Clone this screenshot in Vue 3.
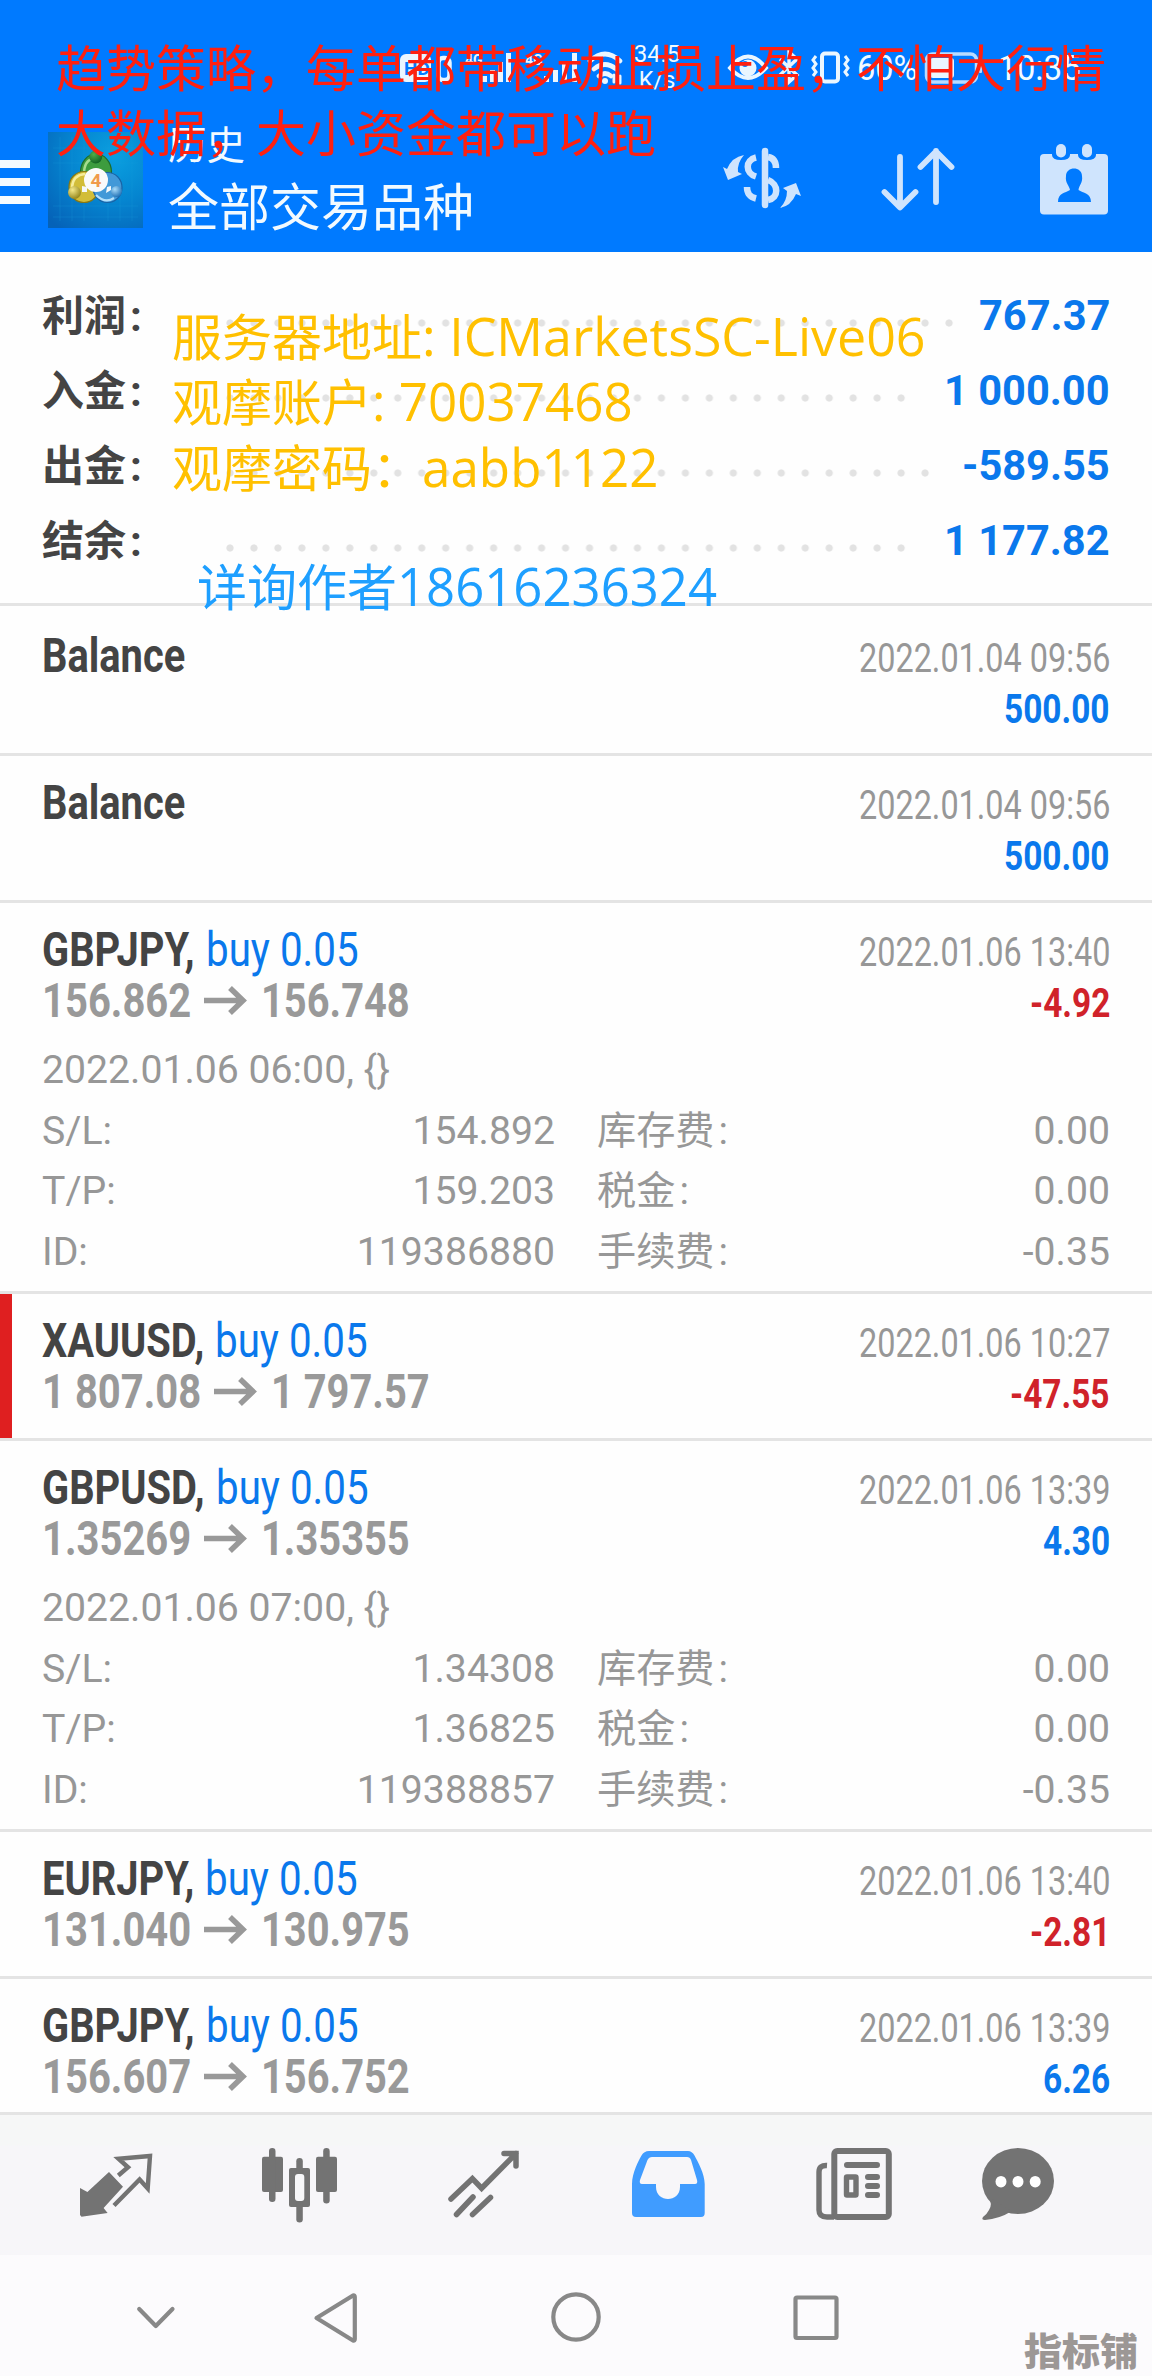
<script setup>
// Narrows text horizontally by a factor and gives the saved width back to the layout.
const vSqueeze = {
  mounted(el, { value }) {
    const w = el.getBoundingClientRect().width
    el.style.transform = `scaleX(${value})`
    el.style.marginRight = `${w * (value - 1)}px`
  },
}

const summary = [
  { label: '利润', value: '767.37', dots: 31 },
  { label: '入金', value: '1 000.00', dots: 29 },
  { label: '出金', value: '-589.55', dots: 30 },
  { label: '结余', value: '1 177.82', dots: 29 },
]

const deals = [
  { title: 'Balance', date: '2022.01.04 09:56', profit: '500.00', first: true },
  { title: 'Balance', date: '2022.01.04 09:56', profit: '500.00' },
  {
    title: 'GBPJPY,', side: 'buy 0.05', date: '2022.01.06 13:40', from: '156.862', to: '156.748', profit: '-4.92',
    details: {
      opened: '2022.01.06 06:00, {}',
      rows: [
        ['S/L:', '154.892', '库存费', '0.00'],
        ['T/P:', '159.203', '税金', '0.00'],
        ['ID:', '119386880', '手续费', '-0.35'],
      ],
    },
  },
  { title: 'XAUUSD,', side: 'buy 0.05', date: '2022.01.06 10:27', from: '1 807.08', to: '1 797.57', profit: '-47.55', marked: true },
  {
    title: 'GBPUSD,', side: 'buy 0.05', date: '2022.01.06 13:39', from: '1.35269', to: '1.35355', profit: '4.30',
    details: {
      opened: '2022.01.06 07:00, {}',
      rows: [
        ['S/L:', '1.34308', '库存费', '0.00'],
        ['T/P:', '1.36825', '税金', '0.00'],
        ['ID:', '119388857', '手续费', '-0.35'],
      ],
    },
  },
  { title: 'EURJPY,', side: 'buy 0.05', date: '2022.01.06 13:40', from: '131.040', to: '130.975', profit: '-2.81' },
  { title: 'GBPJPY,', side: 'buy 0.05', date: '2022.01.06 13:39', from: '156.607', to: '156.752', profit: '6.26' },
]
</script>

<template>
  <div class="screen">
    <header class="header">
      <div class="status">
        <svg class="net" viewBox="400 44 226 44" width="226" height="44">
          <rect x="400" y="54" width="31" height="28" rx="6" fill="#eaf6ff" />
          <text x="404" y="75" font-size="19" font-weight="700" fill="#007aff" font-family="Roboto, sans-serif">HD</text>
          <rect x="438.500" y="58" width="11" height="22" rx="4.500" fill="none" stroke="#eaf6ff" stroke-width="4.500" />
          <g fill="#eaf6ff" font-family="Roboto, sans-serif" font-size="14" font-weight="700">
            <text x="465" y="65">4G</text>
            <text x="525" y="65">4G</text>
          </g>
          <g fill="#eaf6ff">
            <rect x="482" y="76" width="5" height="6" /><rect x="490" y="70" width="5" height="12" /><rect x="498" y="62" width="5" height="20" /><rect x="506" y="53" width="5" height="29" />
            <rect x="544" y="76" width="5" height="6" /><rect x="553" y="70" width="5" height="12" /><rect x="562" y="62" width="5" height="20" /><rect x="572" y="53" width="5" height="29" />
          </g>
          <g fill="none" stroke="#eaf6ff" stroke-width="4.600" stroke-linecap="round">
            <path d="M590 61Q605 47 620 61M594 69Q605 60 616 69M599 76Q605 71 611 76" />
            <path d="M614 82v-7M620 76v7" stroke-width="3" />
          </g>
          <circle cx="605" cy="81" r="3" fill="#eaf6ff" />
        </svg>
        <div class="speed"><span>34.5</span><span>K/s</span></div>
        <svg class="sys" viewBox="726 46 126 42" width="126" height="42" fill="none" stroke="#eaf6ff">
          <path d="M730 68Q748 45 766 68Q748 88 730 68Z" stroke-width="4" />
          <circle cx="748" cy="68" r="8.500" fill="#eaf6ff" stroke="none" />
          <circle cx="745" cy="64" r="3" fill="#007aff" stroke="none" />
          <path d="M780 59L797 75L789 82V52L797 59L780 75" stroke-width="3.400" />
          <rect x="822" y="53.500" width="16" height="28" rx="3" stroke-width="4" />
          <path d="M816 56l-3 4 3 4-3 4 3 4-3 4M845 56l3 4-3 4 3 4-3 4 3 4" stroke-width="3" />
        </svg>
        <span v-squeeze="0.93" class="battery-text">60%</span>
        <svg class="battery" viewBox="926 48 62 40" width="62" height="40">
          <rect x="930.500" y="54" width="50" height="28" rx="6" fill="none" stroke="#b9dcff" stroke-width="3.500" />
          <rect x="934" y="58" width="24" height="20" rx="3" fill="#eaf6ff" />
          <rect x="983" y="63" width="3" height="10" rx="1" fill="#b9dcff" />
        </svg>
        <span v-squeeze="0.95" class="clock">10:35</span>
      </div>
      <div class="toolbar">
        <div class="menu"><i></i><i></i><i></i></div>
        <svg class="logo" viewBox="48 132 95 96" width="95" height="96">
          <defs>
            <radialGradient id="sq" cx="0.7" cy="0.25" r="0.95"><stop offset="0" stop-color="#0aa0e0" /><stop offset="0.5" stop-color="#0585d0" /><stop offset="1" stop-color="#0562b8" /></radialGradient>
            <radialGradient id="ye" cx="0.35" cy="0.3" r="0.8"><stop offset="0" stop-color="#f4e88a" /><stop offset="1" stop-color="#8a7c10" /></radialGradient>
            <radialGradient id="bl" cx="0.35" cy="0.3" r="0.8"><stop offset="0" stop-color="#a8dcfa" /><stop offset="1" stop-color="#1668b0" /></radialGradient>
            <radialGradient id="gr" cx="0.35" cy="0.3" r="0.8"><stop offset="0" stop-color="#4fae48" /><stop offset="1" stop-color="#0c5a20" /></radialGradient>
          </defs>
          <rect x="48" y="132" width="95" height="96" fill="url(#sq)" />
          <path d="M60 137v84M72 137v84M84 137v84M108 137v84M120 137v84M132 137v84M53 148h85M53 163h85M53 206h85M53 217h85" stroke="#1aa0dc" stroke-width="0.600" opacity="0.450" />
          <ellipse cx="96" cy="172" rx="15.500" ry="18" fill="#3d9c3e" stroke="#1d6b2c" stroke-width="1.200" />
          <path d="M84 172Q85 158 97 158" fill="none" stroke="#a5dc90" stroke-width="2.500" />
          <ellipse cx="84" cy="187" rx="15" ry="15.500" fill="#d2bd38" stroke="#857716" stroke-width="1.200" />
          <path d="M72 187Q73 175 85 174" fill="none" stroke="#f6ec9a" stroke-width="2.500" />
          <ellipse cx="107.500" cy="187.500" rx="14.500" ry="15" fill="#4299d8" stroke="#1a62a4" stroke-width="1.200" />
          <path d="M96 195Q105 204 114 198" fill="none" stroke="#b4e0fa" stroke-width="2.200" />
          <path d="M82 186l5 1v5h-5zM107 187l4-1v4l-5 3z" fill="#f4f8fa" />
          <circle cx="95.700" cy="157" r="6.500" fill="url(#gr)" />
          <circle cx="74.500" cy="192.500" r="6.500" fill="url(#ye)" />
          <circle cx="116.500" cy="191.500" r="5.500" fill="url(#bl)" />
          <circle cx="96" cy="180" r="12" fill="#fafafa" />
          <text x="96" y="187" text-anchor="middle" font-size="19" font-weight="700" fill="#f09a4c" font-family="Roboto, sans-serif">4</text>
        </svg>
        <div class="titles">
          <span class="sub">历史</span>
          <span class="main">全部交易品种</span>
        </div>
        <svg class="dollar" viewBox="720 140 84 76" width="84" height="76" fill="none" stroke="#cfe4fd" stroke-width="6.500">
          <path d="M765 151V205" stroke-linecap="round" />
          <path d="M756 157.500C745 160 745 173 756 176.500M768 157C774 158 776 162 776 168M768 180C779 184 779 198 768 200M747 187C747 194 750 197 756 198.500" />
          <path d="M744 155Q732 157 727 169L723 167L728 180L742 174L738 172Q737 163 744 155Z" fill="#cfe4fd" stroke="none" />
          <path d="M780 208Q787 201 787 191L783 188L796 183L801 196L796 194Q791 206 780 208Z" fill="#cfe4fd" stroke="none" />
        </svg>
        <svg class="sort" viewBox="878 140 80 76" width="80" height="76" fill="none" stroke="#cfe4fd" stroke-width="5.800" stroke-linecap="round" stroke-linejoin="round">
          <path d="M900 157V207M884.500 192L900 207.500L915.500 192M936 202V151M920.500 167L936 151.500L951.500 167" />
        </svg>
        <svg class="cal" viewBox="1036 140 76 80" width="76" height="80">
          <rect x="1040" y="154" width="68" height="60.500" rx="4" fill="#cfe4fd" />
          <path d="M1052 153v2q0 5 9 5t9-5v-2zM1078 153v2q0 5 9 5t9-5v-2z" fill="#007aff" />
          <rect x="1056" y="144" width="10" height="13.500" rx="5" fill="#cfe4fd" />
          <rect x="1082" y="144" width="10" height="13.500" rx="5" fill="#cfe4fd" />
          <path d="M1066 176C1066 166 1082 166 1082 176C1083 183 1079 185 1078.500 190C1083 193 1091 193 1091 202H1058C1058 193 1065 193 1070 190C1069 185 1065 183 1066 176Z" fill="#007aff" />
        </svg>
      </div>
    </header>

    <section class="summary">
      <div v-for="s in summary" :key="s.label" class="sum-row">
        <span class="sum-label">{{ s.label }}<span class="colon">:</span></span>
        <i class="dots" :style="{ width: s.dots * 23.97 + 'px' }"></i>
        <b v-squeeze="0.99" class="sum-value">{{ s.value }}</b>
      </div>
    </section>

    <main class="deals">
      <article v-for="(d, n) in deals" :key="n" class="deal" :class="{ first: d.first, open: d.details }">
        <i v-if="d.marked" class="mark"></i>
        <div class="line">
          <span class="left">
            <b v-squeeze="0.83" class="symbol">{{ d.title }}</b>
            <span v-if="d.side" v-squeeze="0.84" class="side">{{ d.side }}</span>
          </span>
          <span v-squeeze="0.81" class="date">{{ d.date }}</span>
        </div>
        <div class="line">
          <span v-if="d.from" class="left prices">
            <b v-squeeze="0.833">{{ d.from }}</b>
            <svg class="arrow" width="43" height="30" viewBox="0 0 43 30" fill="none" stroke="#999" stroke-width="5.500">
              <path d="M0 14.500H39M26 2L39 14.500L26 27" />
            </svg>
            <b v-squeeze="0.83">{{ d.to }}</b>
          </span>
          <b v-squeeze="0.835" class="profit" :class="{ loss: d.profit[0] === '-' }">{{ d.profit }}</b>
        </div>
        <div v-if="d.details" class="details">
          <div class="opened">{{ d.details.opened }}</div>
          <div v-for="r in d.details.rows" :key="r[0]" class="cells">
            <span>{{ r[0] }}</span><span class="num">{{ r[1] }}</span>
            <span class="cjk">{{ r[2] }}<span class="colon">:</span></span><span class="num">{{ r[3] }}</span>
          </div>
        </div>
      </article>
    </main>

    <nav class="tabs">
      <svg viewBox="74 2138 84 90">
        <path d="M80 2188L87.400 2192L109 2172L123 2186.700L103.600 2208L107.600 2213L81.500 2216.700L80 2215Z" fill="#737373" />
        <path d="M118.300 2175.500L128 2167.300L118.500 2158.700L150 2156L147.700 2188.500L139.600 2179.500L114 2205.500" fill="none" stroke="#737373" stroke-width="4.400" />
      </svg>
      <svg viewBox="258 2138 84 90" fill="#737373">
        <rect x="262" y="2156.700" width="21" height="35.300" rx="2" /><rect x="269" y="2148" width="6.500" height="54" rx="3.200" />
        <rect x="316" y="2156.700" width="21" height="35.300" rx="2" /><rect x="323.200" y="2148" width="6.500" height="55.500" rx="3.200" />
        <rect x="289" y="2168" width="21" height="39" rx="2" /><rect x="296.300" y="2158" width="6.500" height="64.500" rx="3.200" />
        <rect x="295" y="2174" width="9.300" height="27" rx="3" fill="#f7f7f9" />
      </svg>
      <svg viewBox="442 2138 84 90" fill="none" stroke="#737373" stroke-width="5.500" stroke-linecap="round">
        <path d="M451 2199L472.400 2178.700L481.600 2188.200L516 2153.500M504 2153.500H516V2166M456.500 2214.500L473 2197M472.500 2214.500L490.500 2197.500" />
      </svg>
      <svg viewBox="626 2138 84 90">
        <path fill-rule="evenodd" d="M632 2213V2184C632 2173 639 2160 641.500 2155.500Q644 2151 649 2151H688Q692 2151 694.500 2155.500C698 2162 704.700 2174 704.700 2184V2213Q704.700 2217 701 2217H636Q632 2217 632 2213ZM652 2157Q649 2157 647.500 2160L640 2180Q639 2184 642 2184H656V2187C656 2203 680 2203 680 2187V2184H695Q698 2184 697 2180L691 2160Q690 2157 687 2157Z" fill="#409cff" />
      </svg>
      <svg viewBox="812 2138 84 90" fill="none" stroke="#737373" stroke-width="6">
        <rect x="834.300" y="2151" width="54.500" height="66" rx="3" />
        <path d="M827 2165.500Q819 2165 819 2172V2210Q819 2217 827 2217H834" stroke-width="5.400" />
        <path d="M847 2165H877M868 2177H877M868 2186H877M868 2195H877" stroke-linecap="round" />
        <rect x="846.500" y="2177" width="9.500" height="18" rx="0.500" stroke-width="5.400" />
      </svg>
      <svg viewBox="976 2138 84 90" fill="#737373">
        <ellipse cx="1018" cy="2181" rx="36" ry="33" />
        <path d="M988 2196Q993 2204 989 2210Q987 2214 983 2217Q981 2220 985 2220Q999 2219 1012 2211Z" />
        <g fill="#fff"><ellipse cx="1001" cy="2181.700" rx="5.500" ry="5.800" /><ellipse cx="1018" cy="2181.700" rx="5.500" ry="5.800" /><ellipse cx="1035.200" cy="2181.700" rx="5.500" ry="5.800" /></g>
      </svg>
    </nav>

    <footer class="sysnav">
      <svg viewBox="126 2287 60 60"><path d="M139.200 2309L155.800 2326L172.500 2309" /></svg>
      <svg viewBox="305 2287 60 60"><path d="M316.500 2318L353 2295.500Q354.800 2295 354.800 2297V2339Q354.800 2341 353 2340.500Z" /></svg>
      <svg viewBox="546 2287 60 60"><circle cx="576" cy="2317" r="22.700" /></svg>
      <svg viewBox="786 2287 60 60"><rect x="795.500" y="2297.500" width="41" height="40.500" rx="1.500" /></svg>
      <span class="brand">指标铺</span>
    </footer>

    <div class="note promo"><div>趋势策略，每单都带移动止损止盈，不怕大行情</div><div>大数据，大小资金都可以跑</div></div>
    <div class="note account">
      <div>服务器地址<span v-squeeze="0.98" class="latin">: ICMarketsSC-Live06</span></div>
      <div>观摩账户<span v-squeeze="0.965" class="latin">: 70037468</span></div>
      <div>观摩密码：<span v-squeeze="0.965" class="latin">aabb1122</span></div>
    </div>
    <div class="note contact"><div>详询作者<span v-squeeze="0.96" class="latin">18616236324</span></div></div>
  </div>
</template>

<style>
body {
  background: #fff;
}
</style>

<style scoped>
.screen {
  position: relative;
  width: 1152px;
  height: 2376px;
  overflow: hidden;
  display: flex;
  flex-direction: column;
  background: #fefefe;
  font-family: Roboto, 'Noto Sans CJK SC', sans-serif;
  white-space: nowrap;
}
.screen * {
  box-sizing: border-box;
}
svg {
  display: block;
  flex: none;
}
/* header */
.header {
  height: 252px;
  flex: none;
  background: #007aff;
  color: #f2faff;
}
.status {
  height: 104px;
  display: flex;
  align-items: flex-start;
  padding-left: 400px;
}
.net {
  margin-top: 44px;
}
.speed {
  width: 52px;
  margin: 41px 0 0 5px;
  display: flex;
  flex-direction: column;
  align-items: center;
  font-size: 23.5px;
  line-height: 26px;
}
.sys {
  margin: 46px 0 0 43px;
}
.battery-text,
.clock {
  display: inline-block;
  transform-origin: left;
  font-size: 35px;
  line-height: 40px;
  margin-top: 49px;
}
.battery-text {
  margin-left: 5px;
}
.battery {
  margin: 48px 0 0 5px;
}
.clock {
  margin-left: 14px;
}
.toolbar {
  height: 148px;
  display: flex;
  align-items: flex-start;
}
.menu {
  width: 30px;
  margin-top: 56px;
  display: flex;
  flex-direction: column;
  gap: 10px;
}
.menu i {
  height: 8px;
  background: #f4faff;
}
.logo {
  margin: 28px 0 0 18px;
}
.titles {
  width: 577px;
  padding-left: 25px;
  display: flex;
  flex-direction: column;
}
.sub {
  font-size: 38.5px;
  line-height: 44px;
  margin-top: 20px;
}
.main {
  font-size: 51px;
  line-height: 60px;
  margin-top: 11px;
}
.dollar {
  margin-top: 36px;
}
.sort {
  margin: 36px 0 0 74px;
}
.cal {
  margin: 36px 0 0 78px;
}
/* summary */
.summary {
  height: 351px;
  flex: none;
  padding: 26px 42px 0;
}
.sum-row {
  height: 75px;
  display: flex;
  align-items: baseline;
  line-height: 75px;
  font-size: 42px;
}
.sum-label {
  width: 176px;
  font-weight: 700;
  color: #444;
  position: relative;
  top: 1px;
}
.colon {
  margin-left: 4px;
}
.dots {
  height: 8px;
  align-self: center;
  margin-top: 14px;
  margin-right: auto;
  background: radial-gradient(circle at 50% 50%, #e2e2e2 3.2px, transparent 4px) 0 0 / 23.97px 8px repeat-x;
}
.sum-value {
  display: inline-block;
  transform-origin: left;
  color: #0a78ec;
}
/* deals */
.deals {
  height: 1509px;
  flex: none;
  overflow: hidden;
}
.deal {
  position: relative;
  height: 147px;
  border-top: 3px solid #e4e4e4;
  padding: 21px 42px 0;
}
.deal.first {
  height: 150px;
  padding-top: 24px;
}
.deal.open {
  height: 391px;
}
.mark {
  position: absolute;
  left: 0;
  top: 0;
  width: 12px;
  height: 144px;
  background: #df1f20;
}
.line {
  height: 51px;
  line-height: 51px;
  display: flex;
  align-items: baseline;
}
/* keeps every line on the baseline of the 48px type */
.line::before {
  content: '\200b';
  width: 0;
  font-size: 48px;
}
.left {
  display: flex;
  align-items: baseline;
  font-size: 48px;
}
.line b,
.side,
.date {
  display: inline-block;
  transform-origin: left;
}
.line > :last-child {
  flex: none;
}
.left {
  flex: 1;
}
.line > .profit:only-child {
  position: static;
}
.line:not(:has(.left)) {
  justify-content: space-between;
}
.symbol {
  color: #444;
}
.side {
  margin-left: 11px;
  color: #0a78ec;
}
.date {
  font-size: 40px;
  color: #979797;
}
.prices {
  color: #999;
}
.arrow {
  margin: 0 13.5px 0 13px;
  align-self: center;
}
.profit {
  font-size: 40px;
  color: #0a78ec;
}
.profit.loss {
  color: #d0222a;
}
.details {
  margin-top: 14px;
  font-size: 39.2px;
  line-height: 60.6px;
  color: #979797;
}
.opened,
.cells {
  height: 60.6px;
}
.cells {
  display: grid;
  grid-template-columns: 120px 393px 1fr 200px;
}
.num {
  text-align: right;
}
.cjk {
  padding-left: 42px;
}
/* bottom bars */
.tabs {
  height: 143px;
  flex: none;
  border-top: 3px solid #e4e4e4;
  background: linear-gradient(#f6f7f7 30px, #f7f6f9 31px);
  display: flex;
  gap: 100px;
  padding: 23px 0 0 74px;
}
.tabs svg {
  width: 84px;
  height: 90px;
}
.tabs svg:nth-child(5) {
  margin-left: 2px;
}
.tabs svg:nth-child(6) {
  margin-left: -20px;
}
.sysnav {
  position: relative;
  height: 121px;
  flex: none;
  background: #fcfbfd;
  display: flex;
  padding: 32px 0 0 126px;
}
.sysnav svg {
  width: 60px;
  height: 60px;
  fill: none;
  stroke: #888;
  stroke-width: 4.2;
  stroke-linejoin: round;
  stroke-linecap: round;
}
.sysnav svg:nth-child(2) {
  margin-left: 119px;
}
.sysnav svg:nth-child(3) {
  margin-left: 181px;
}
.sysnav svg:nth-child(4) {
  margin-left: 180px;
}
.brand {
  position: absolute;
  left: 1024px;
  top: 73px;
  font: 900 38px/42px 'Noto Sans CJK SC', sans-serif;
  color: #9c9795;
}
/* notes laid over the screen */
.note {
  position: absolute;
  font-family: 'Noto Sans CJK SC', sans-serif;
  font-size: 50px;
  line-height: 65.3px;
}
.note div {
  height: 65.3px;
}
.latin {
  display: inline-block;
  transform-origin: left;
  font-family: 'Open Sans', sans-serif;
  font-size: 53px;
  line-height: 60px;
  white-space: pre;
}
.promo {
  left: 56px;
  top: 33px;
  color: #ff2010;
}
.account {
  left: 172px;
  top: 302px;
  color: #ffc000;
}
.contact {
  left: 197px;
  top: 552px;
  color: #1e9fff;
}
</style>
